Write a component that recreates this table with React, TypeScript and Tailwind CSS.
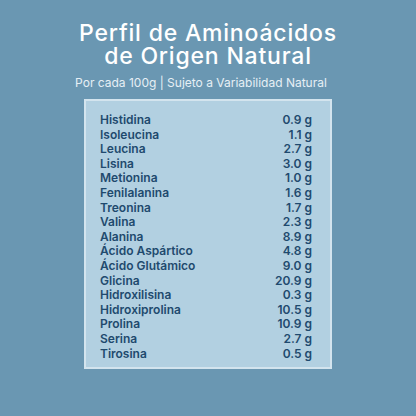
import React from 'react';

const rows: [string, string][] = [
  ['Histidina', '0.9 g'],
  ['Isoleucina', '1.1 g'],
  ['Leucina', '2.7 g'],
  ['Lisina', '3.0 g'],
  ['Metionina', '1.0 g'],
  ['Fenilalanina', '1.6 g'],
  ['Treonina', '1.7 g'],
  ['Valina', '2.3 g'],
  ['Alanina', '8.9 g'],
  ['Ácido Aspártico', '4.8 g'],
  ['Ácido Glutámico', '9.0 g'],
  ['Glicina', '20.9 g'],
  ['Hidroxilisina', '0.3 g'],
  ['Hidroxiprolina', '10.5 g'],
  ['Prolina', '10.9 g'],
  ['Serina', '2.7 g'],
  ['Tirosina', '0.5 g'],
];

export default function App() {
  return (
    <div className="w-[416px] h-[416px] bg-[#6a97b2] flex flex-col items-center pt-[22px] font-['Inter',sans-serif]">
      {/* Title */}
      <h1 className="text-[23px] leading-[23px] font-medium tracking-[0.035em] text-white text-center">
        Perfil de Aminoácidos
        <br />
        de Origen Natural
      </h1>
      <p className="mt-[7px] mr-[14px] text-[12px] leading-[16px] text-[#e6eff5]">
        Por cada 100g | Sujeto a Variabilidad Natural
      </p>

      {/* Amino acid table */}
      <div className="mt-[8px] w-[248px] h-[270px] border-2 border-[#d3e4ee] bg-[#b2d0e1] pl-[14px] pr-[18px] pt-[12px]">
        {rows.map(([name, value]) => (
          <div key={name} className="flex justify-between text-[12px] leading-[14.6px] font-semibold text-[#1f4a6e]">
            <span>{name}</span>
            <span>{value}</span>
          </div>
        ))}
      </div>
    </div>
  );
}
